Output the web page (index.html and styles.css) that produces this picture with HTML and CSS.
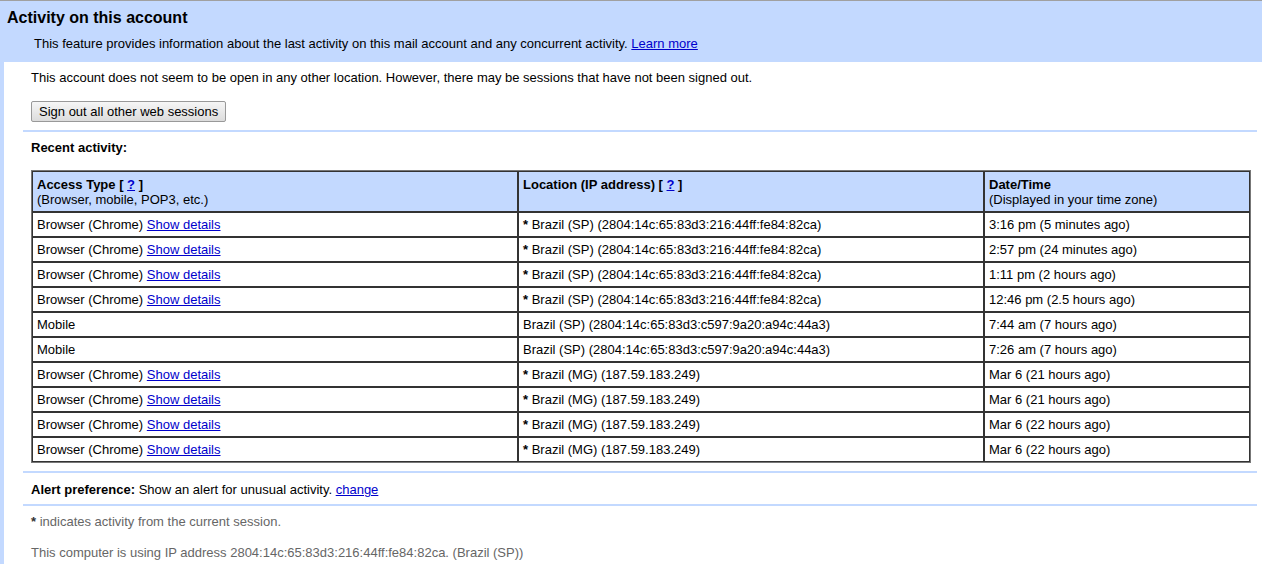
FILE: index.html
```html
<!DOCTYPE html>
<html>
<head>
<meta charset="utf-8">
<link rel="stylesheet" href="styles.css">
</head>
<body>
<div class="page">
  <div class="header">
    <h1 class="title">Activity on this account</h1>
    <p class="desc">This feature provides information about the last activity on this mail account and any concurrent activity. <a href="#">Learn more</a></p>
  </div>
  <div class="main">
    <div class="section top">
      <p class="status">This account does not seem to be open in any other location. However, there may be sessions that have not been signed out.</p>
      <button class="btn">Sign out all other web sessions</button>
    </div>
    <div class="section recent">
      <p class="label">Recent activity:</p>
      <table class="activity">
        <colgroup><col class="c1"><col class="c2"><col class="c3"></colgroup>
        <thead>
          <tr>
            <th><b>Access Type [ <a href="#">?</a> ]</b><br>(Browser, mobile, POP3, etc.)</th>
            <th><b>Location (IP address) [ <a href="#">?</a> ]</b></th>
            <th><b>Date/Time</b><br>(Displayed in your time zone)</th>
          </tr>
        </thead>
        <tbody>
          <tr><td>Browser (Chrome) <a href="#">Show details</a></td><td><b>*</b> Brazil (SP) (2804:14c:65:83d3:216:44ff:fe84:82ca)</td><td>3:16 pm (5 minutes ago)</td></tr>
          <tr><td>Browser (Chrome) <a href="#">Show details</a></td><td><b>*</b> Brazil (SP) (2804:14c:65:83d3:216:44ff:fe84:82ca)</td><td>2:57 pm (24 minutes ago)</td></tr>
          <tr><td>Browser (Chrome) <a href="#">Show details</a></td><td><b>*</b> Brazil (SP) (2804:14c:65:83d3:216:44ff:fe84:82ca)</td><td>1:11 pm (2 hours ago)</td></tr>
          <tr><td>Browser (Chrome) <a href="#">Show details</a></td><td><b>*</b> Brazil (SP) (2804:14c:65:83d3:216:44ff:fe84:82ca)</td><td>12:46 pm (2.5 hours ago)</td></tr>
          <tr><td>Mobile</td><td>Brazil (SP) (2804:14c:65:83d3:c597:9a20:a94c:44a3)</td><td>7:44 am (7 hours ago)</td></tr>
          <tr><td>Mobile</td><td>Brazil (SP) (2804:14c:65:83d3:c597:9a20:a94c:44a3)</td><td>7:26 am (7 hours ago)</td></tr>
          <tr><td>Browser (Chrome) <a href="#">Show details</a></td><td><b>*</b> Brazil (MG) (187.59.183.249)</td><td>Mar 6 (21 hours ago)</td></tr>
          <tr><td>Browser (Chrome) <a href="#">Show details</a></td><td><b>*</b> Brazil (MG) (187.59.183.249)</td><td>Mar 6 (21 hours ago)</td></tr>
          <tr><td>Browser (Chrome) <a href="#">Show details</a></td><td><b>*</b> Brazil (MG) (187.59.183.249)</td><td>Mar 6 (22 hours ago)</td></tr>
          <tr><td>Browser (Chrome) <a href="#">Show details</a></td><td><b>*</b> Brazil (MG) (187.59.183.249)</td><td>Mar 6 (22 hours ago)</td></tr>
        </tbody>
      </table>
    </div>
    <div class="section alert">
      <p class="pref"><b>Alert preference:</b> Show an alert for unusual activity. <a href="#">change</a></p>
    </div>
    <div class="section notes">
      <p class="note"><b>*</b> indicates activity from the current session.</p>
      <p class="note ip">This computer is using IP address 2804:14c:65:83d3:216:44ff:fe84:82ca. (Brazil (SP))</p>
    </div>
  </div>
</div>
</body>
</html>
```
FILE: styles.css
```css
html, body {
  margin: 0;
  padding: 0;
  background: #fff;
}
body {
  font-family: "Liberation Sans", Arial, sans-serif;
  font-size: 13px;
  color: #000;
}
a {
  color: #0000cc;
  text-decoration: underline;
}
p {
  margin: 0;
}
.page {
  border-top: 1px solid #a0a0a0;
  height: 563px;
  overflow: hidden;
}
.header {
  background: #c3d9ff;
  padding: 7px 0 0 0;
  height: 54px;
}
.title {
  margin: 0 0 0 7px;
  font-size: 16px;
  font-weight: bold;
  line-height: 20px;
}
.desc {
  margin: 8px 0 0 34px;
  line-height: 16px;
}
.main {
  border-left: 4px solid #c3d9ff;
  padding: 0 5px 0 19px;
  height: 510px;
}
.section {
  padding: 0 7px 0 8px;
}
.top {
  padding-top: 8px;
  height: 60px;
  border-bottom: 2px solid #c3d9ff;
}
.status {
  line-height: 16px;
}
.btn {
  margin-top: 15px;
  height: 21px;
  padding: 0 7px;
  font-family: "Liberation Sans", Arial, sans-serif;
  font-size: 13px;
  line-height: 15px;
  color: #000;
  background: linear-gradient(#f6f6f6, #dcdcdc);
  border: 1px solid #999;
  border-radius: 2px;
}
.recent {
  padding-top: 8px;
  height: 331px;
  border-bottom: 2px solid #c3d9ff;
}
.label {
  font-weight: bold;
  line-height: 16px;
}
.activity {
  margin-top: 14px;
  width: 1218px;
  border-collapse: separate;
  border-spacing: 0;
  border: 1px solid #777;
  table-layout: fixed;
}
.c1 { width: 486px; }
.c2 { width: 466px; }
.c3 { width: 266px; }
.activity th,
.activity td {
  border: 1px solid #333;
  text-align: left;
  vertical-align: top;
  font-weight: normal;
  padding: 4px 4px;
  line-height: 15px;
}
.activity th {
  background: #c3d9ff;
  height: 30px;
  padding-top: 5px;
}
.activity td {
  height: 15px;
  padding-top: 4px;
  padding-bottom: 4px;
}
.alert {
  height: 31px;
  border-bottom: 2px solid #c3d9ff;
}
.pref {
  padding-top: 9px;
  line-height: 16px;
}
.notes {
  color: #666;
}
.note {
  padding-top: 8px;
  line-height: 16px;
}
.note b {
  color: #333;
}
.note.ip {
  padding-top: 15px;
}
```
